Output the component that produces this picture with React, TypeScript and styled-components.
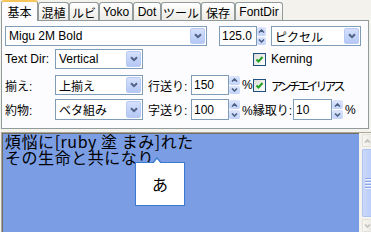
import React from "react";
import styled, { createGlobalStyle } from "styled-components";

const Global = createGlobalStyle`
  html, body { margin: 0; padding: 0; overflow: hidden; background: #F3F2EC; }
  #root { width: 371px; height: 232px; }
`;

const Window = styled.div`
  width: 371px;
  height: 232px;
  overflow: hidden;
  display: flex;
  flex-direction: column;
  background: #F3F2EC;
  font-family: "Liberation Sans", "Noto Sans CJK JP", sans-serif;
  font-size: 12px;
  color: #000;
`;

const TabStrip = styled.div`
  display: flex;
  align-items: flex-end;
  height: 20px;
  padding-left: 1px;
  position: relative;
  z-index: 1;
`;

const Tab = styled.div<{ $w: number; $active?: boolean }>`
  box-sizing: border-box;
  flex: none;
  width: ${(p) => p.$w}px;
  height: ${(p) => (p.$active ? 21 : 18)}px;
  margin-bottom: ${(p) => (p.$active ? -1 : 0)}px;
  display: flex;
  align-items: center;
  justify-content: center;
  border: 1px solid #919B9C;
  border-bottom: none;
  border-top: ${(p) => (p.$active ? "2px solid #F6C65A" : "1px solid #919B9C")};
  border-radius: 3px 3px 0 0;
  background: ${(p) => (p.$active ? "#FCFCFE" : "linear-gradient(#FFFFFF, #ECEBE5)")};
  white-space: nowrap;
  padding-top: ${(p) => (p.$active ? 0 : 1)}px;
`;

const Panel = styled.div`
  box-sizing: border-box;
  height: 109px;
  margin: 0 2px 0 1px;
  border: 1px solid #919B9C;
  background: #FCFCFE;
  padding: 5px 0 0 3px;
  display: flex;
  flex-direction: column;
`;

const Row = styled.div<{ $mt?: number; $h?: number }>`
  display: flex;
  align-items: center;
  height: ${(p) => p.$h ?? 20}px;
  margin-top: ${(p) => p.$mt ?? 0}px;
`;

const Label = styled.span<{ $w?: number; $ml?: number; $tight?: boolean }>`
  flex: none;
  white-space: nowrap;
  ${(p) => (p.$w ? `width: ${p.$w}px;` : "")}
  margin-left: ${(p) => p.$ml ?? 0}px;
  letter-spacing: ${(p) => (p.$tight ? "-3px" : "normal")};
`;

const ComboBox = styled.div<{ $w: number; $ml?: number }>`
  box-sizing: border-box;
  flex: none;
  width: ${(p) => p.$w}px;
  height: 100%;
  margin-left: ${(p) => p.$ml ?? 0}px;
  border: 1px solid #7F9DB9;
  background: #fff;
  display: flex;
  align-items: stretch;
  padding: 1px;
`;

const ComboText = styled.span`
  flex: 1;
  display: flex;
  align-items: center;
  padding-left: 2px;
  white-space: nowrap;
  overflow: hidden;
`;

const DropButton = styled.div`
  box-sizing: border-box;
  width: 15px;
  border: 1px solid #B8CAF3;
  border-radius: 2px;
  background: linear-gradient(#D5E0FC, #B5C8F5);
  display: flex;
  align-items: center;
  justify-content: center;
`;

const SpinBox = styled.div<{ $ml?: number }>`
  flex: none;
  display: flex;
  height: 100%;
  margin-left: ${(p) => p.$ml ?? 0}px;
`;

const NumField = styled.div<{ $w: number }>`
  box-sizing: border-box;
  width: ${(p) => p.$w}px;
  height: 100%;
  border: 1px solid #7F9DB9;
  background: #fff;
  display: flex;
  align-items: center;
  padding-left: 2px;
`;

const SpinColumn = styled.div<{ $w: number }>`
  width: ${(p) => p.$w}px;
  display: flex;
  flex-direction: column;
  gap: 1px;
  padding: 1px 0;
  box-sizing: border-box;
`;

const SpinButton = styled.div`
  flex: 1;
  border-radius: 2px;
  background: linear-gradient(#DCE5FC, #C3D3F8);
  display: flex;
  align-items: center;
  justify-content: center;
`;

const CheckBox = styled.div<{ $ml?: number }>`
  box-sizing: border-box;
  flex: none;
  width: 13px;
  height: 13px;
  margin-left: ${(p) => p.$ml ?? 0}px;
  border: 1px solid #1C5180;
  background: linear-gradient(135deg, #DCDCD7, #FFFFFF);
  display: flex;
  align-items: center;
  justify-content: center;
`;

const Editor = styled.div`
  flex: 1;
  position: relative;
  display: flex;
  margin-top: 3px;
  margin-left: 1px;
  border-top: 1px solid #ACA899;
  border-left: 1px solid #ACA899;
  box-shadow: inset 1px 1px 0 #716F64;
  background: #7B9DE3;
`;

const EditorText = styled.div`
  flex: 1;
  padding: 0 0 0 3px;
  font-family: "Noto Sans CJK JP", sans-serif;
  font-size: 16px;
  line-height: 16px;
  letter-spacing: 0.55px;
  color: #000;
  white-space: pre;
`;

const ScrollBar = styled.div`
  width: 12px;
  box-sizing: border-box;
  padding: 1px 0 0 3px;
  background: #F4F3EE;
  display: flex;
  flex-direction: column;
  gap: 2px;
`;

const ScrollArrow = styled.div`
  height: 13px;
  flex: none;
  box-sizing: border-box;
  border: 1px solid #E4E2D8;
  border-right: none;
  border-radius: 2px 0 0 2px;
  background: linear-gradient(90deg, #F7F6F1, #ECEBE5);
  display: flex;
  align-items: center;
  justify-content: flex-end;
`;

const ScrollThumb = styled.div`
  flex: 1;
  box-sizing: border-box;
  border: 1px solid #AFC3F2;
  border-right: none;
  border-radius: 2px 0 0 2px;
  background: linear-gradient(90deg, #CAD8FB, #BCCEF9);
  display: flex;
  flex-direction: column;
  justify-content: center;
  align-items: flex-end;
  gap: 1px;
`;

const Grip = styled.div`
  width: 6px;
  height: 1px;
  background: #8EA6E6;
  box-shadow: 0 1px 0 #EEF2FE;
  margin-bottom: 1px;
`;

const Candidate = styled.div`
  position: absolute;
  left: 133px;
  top: 29px;
  width: 50px;
  height: 44px;
  box-sizing: border-box;
  border: 1px solid #3B7AD0;
  background: #fff;
  display: flex;
  align-items: center;
  justify-content: center;
  font-family: "Noto Sans CJK JP", sans-serif;
  font-size: 16px;
  color: #000;

  &::before {
    content: "";
    position: absolute;
    left: 16px;
    top: -6px;
    border-left: 5px solid transparent;
    border-right: 5px solid transparent;
    border-bottom: 6px solid #3B7AD0;
  }
  &::after {
    content: "";
    position: absolute;
    left: 17px;
    top: -4px;
    border-left: 4px solid transparent;
    border-right: 4px solid transparent;
    border-bottom: 5px solid #fff;
  }
`;

const Chevron = () => (
  <svg width="8" height="6" viewBox="0 0 8 6">
    <path d="M1 1.2 L4 4.2 L7 1.2" stroke="#4D6185" strokeWidth="2" fill="none" />
  </svg>
);

const SmallChevron = ({ up, color = "#4D6185" }: { up?: boolean; color?: string }) => (
  <svg width="7" height="4" viewBox="0 0 7 4">
    <path
      d={up ? "M1 3.5 L3.5 1 L6 3.5" : "M1 0.5 L3.5 3 L6 0.5"}
      stroke={color}
      strokeWidth="1.6"
      fill="none"
    />
  </svg>
);

const Check = () => (
  <svg width="9" height="9" viewBox="0 0 9 9">
    <path d="M1.5 4.5 L3.5 6.5 L7.5 2" stroke="#21A121" strokeWidth="2" fill="none" />
  </svg>
);

const Combo = ({ w, ml, children }: { w: number; ml?: number; children: React.ReactNode }) => (
  <ComboBox $w={w} $ml={ml}>
    <ComboText>{children}</ComboText>
    <DropButton>
      <Chevron />
    </DropButton>
  </ComboBox>
);

const Spinner = ({ w, sw = 10, ml, value }: { w: number; sw?: number; ml?: number; value: string }) => (
  <SpinBox $ml={ml}>
    <NumField $w={w}>{value}</NumField>
    <SpinColumn $w={sw}>
      <SpinButton>
        <SmallChevron up />
      </SpinButton>
      <SpinButton>
        <SmallChevron />
      </SpinButton>
    </SpinColumn>
  </SpinBox>
);

const tabs: { label: string; w: number; active?: boolean }[] = [
  { label: "基本", w: 37, active: true },
  { label: "混植", w: 31 },
  { label: "ルビ", w: 30 },
  { label: "Yoko", w: 34 },
  { label: "Dot", w: 28 },
  { label: "ツール", w: 40 },
  { label: "保存", w: 34 },
  { label: "FontDir", w: 48 },
];

export default function App() {
  return (
    <>
      <Global />
      <Window>
        <TabStrip>
          {tabs.map((t) => (
            <Tab key={t.label} $w={t.w} $active={t.active}>
              {t.label}
            </Tab>
          ))}
        </TabStrip>
        <Panel>
          <Row>
            <Combo w={202}>Migu 2M Bold</Combo>
            <Spinner w={38} sw={9} ml={12} value="125.0" />
            <Combo w={90} ml={5}>ピクセル</Combo>
          </Row>
          <Row $mt={3}>
            <Label $w={50}>Text Dir:</Label>
            <Combo w={88}>Vertical</Combo>
            <CheckBox $ml={110}>
              <Check />
            </CheckBox>
            <Label $ml={5}>Kerning</Label>
          </Row>
          <Row $mt={6}>
            <Label $w={50}>揃え:</Label>
            <Combo w={88}>上揃え</Combo>
            <Label $w={43} $ml={5}>行送り:</Label>
            <Spinner w={38} sw={11} value="150" />
            <Label $w={11} $ml={2}>%</Label>
            <CheckBox>
              <Check />
            </CheckBox>
            <Label $ml={5} $tight>アンチエイリアス</Label>
          </Row>
          <Row $mt={4} $h={21}>
            <Label $w={50}>約物:</Label>
            <Combo w={88}>ベタ組み</Combo>
            <Label $w={43} $ml={5}>字送り:</Label>
            <Spinner w={38} sw={11} value="100" />
            <Label $w={51} $ml={2}>%縁取り:</Label>
            <Spinner w={39} sw={11} value="10" />
            <Label $ml={2}>%</Label>
          </Row>
        </Panel>
        <Editor>
          <EditorText>{"煩悩に[ruby 塗 まみ]れた\nその生命と共になり"}</EditorText>
          <ScrollBar>
            <ScrollArrow>
              <SmallChevron up color="#C5C3B6" />
            </ScrollArrow>
            <ScrollThumb>
              <Grip />
              <Grip />
              <Grip />
              <Grip />
            </ScrollThumb>
            <ScrollArrow>
              <SmallChevron color="#C5C3B6" />
            </ScrollArrow>
          </ScrollBar>
          <Candidate>あ</Candidate>
        </Editor>
      </Window>
    </>
  );
}
